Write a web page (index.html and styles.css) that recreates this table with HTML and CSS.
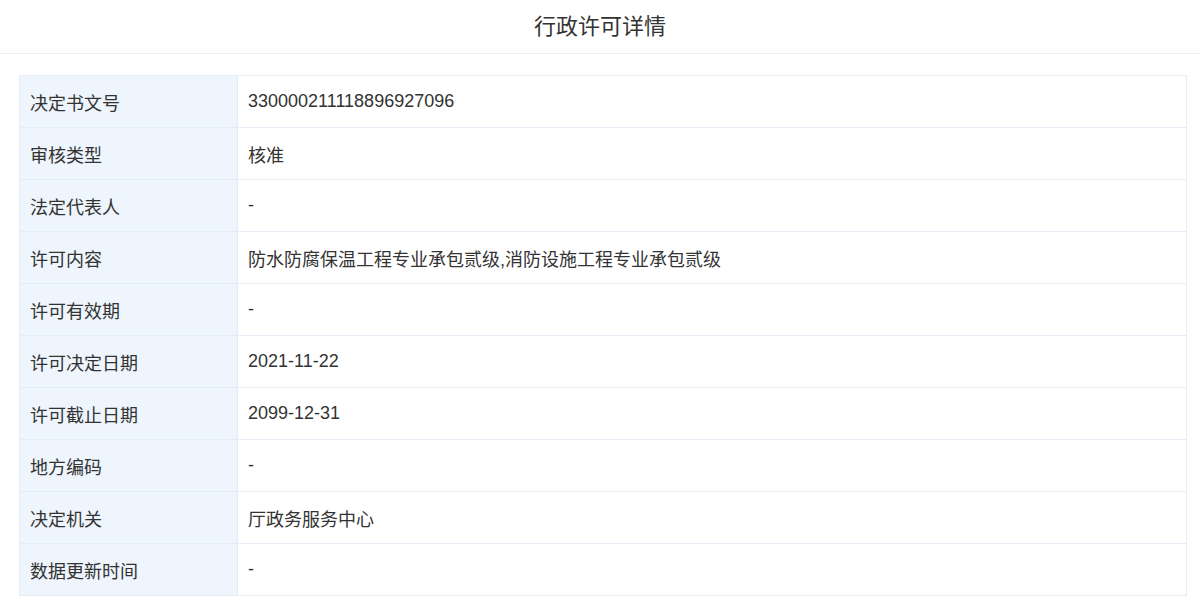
FILE: index.html
```html
<!DOCTYPE html>
<html lang="zh-CN">
<head>
<meta charset="utf-8">
<title>行政许可详情</title>
<link rel="stylesheet" href="styles.css">
</head>
<body>
<header class="page-header">
  <h1 class="page-title">行政许可详情</h1>
</header>
<main class="content">
  <table class="detail-table">
    <tbody>
      <tr><th>决定书文号</th><td>330000211118896927096</td></tr>
      <tr><th>审核类型</th><td>核准</td></tr>
      <tr><th>法定代表人</th><td>-</td></tr>
      <tr><th>许可内容</th><td>防水防腐保温工程专业承包贰级,消防设施工程专业承包贰级</td></tr>
      <tr><th>许可有效期</th><td>-</td></tr>
      <tr><th>许可决定日期</th><td>2021-11-22</td></tr>
      <tr><th>许可截止日期</th><td>2099-12-31</td></tr>
      <tr><th>地方编码</th><td>-</td></tr>
      <tr><th>决定机关</th><td>厅政务服务中心</td></tr>
      <tr><th>数据更新时间</th><td>-</td></tr>
    </tbody>
  </table>
</main>
</body>
</html>
```
FILE: styles.css
```css
html, body {
  margin: 0;
  padding: 0;
  background: #fff;
}
body {
  font-family: "Liberation Sans", "Noto Sans CJK SC", sans-serif;
  color: #333;
}
.page-header {
  height: 53px;
  border-bottom: 1px solid #eeeeee;
  display: flex;
  align-items: center;
  justify-content: center;
}
.page-title {
  margin: 0;
  font-size: 22px;
  font-weight: normal;
  color: #333;
  line-height: 1;
}
.content {
  padding: 21px 13px 0 19px;
}
.detail-table {
  width: 100%;
  border-collapse: collapse;
  border: 1px solid #e4edf6;
}
.detail-table th,
.detail-table td {
  height: 52px;
  padding: 0 10px;
  border: 1px solid #e4edf6;
  font-size: 18px;
  font-weight: normal;
  text-align: left;
  color: #333;
  box-sizing: border-box;
}
.detail-table th {
  width: 218px;
  background: #eef5fc;
}
.detail-table td {
  background: #fff;
}
```
